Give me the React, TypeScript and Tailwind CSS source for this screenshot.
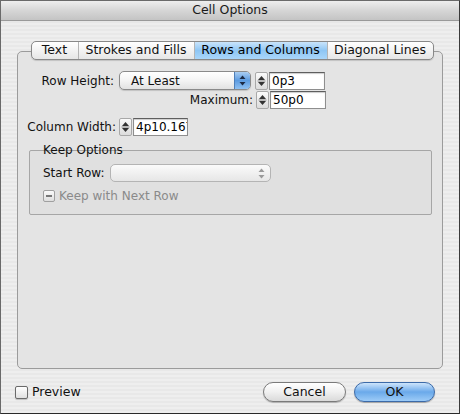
import React from "react";

const font = "font-['DejaVu_Sans',sans-serif]";

// little up/down arrows used by steppers and pop-ups
const Arrows = ({ color = "#222" }: { color?: string }) => (
  <svg width="7" height="11" viewBox="0 0 7 11">
    <path d="M3.5 0.5 L6.5 4 L0.5 4 Z" fill={color} />
    <path d="M3.5 10.5 L6.5 7 L0.5 7 Z" fill={color} />
  </svg>
);

const Stepper = () => (
  <div className="flex h-[18px] w-[13px] flex-col items-center justify-center rounded-[2px] border border-[#a8a8a8] bg-gradient-to-b from-[#fafafa] to-[#dcdcdc]">
    <svg width="9" height="12" viewBox="0 0 9 12">
      <path d="M4.5 1 L8 5 L1 5 Z" fill="#333" />
      <path d="M0.5 6 H8.5" stroke="#888" strokeWidth="1" />
      <path d="M4.5 11 L8 7 L1 7 Z" fill="#333" />
    </svg>
  </div>
);

const NumField = ({ value, width }: { value: string; width: string }) => (
  <div className="flex items-center">
    <Stepper />
    <div
      className={`ml-px flex h-[18px] ${width} items-center overflow-hidden whitespace-nowrap border border-[#8e8e8e] border-t-[#5e5e5e] bg-white pl-[2px] text-[12px] text-black shadow-[inset_0_1px_1px_rgba(0,0,0,0.2)]`}
    >
      {value}
    </div>
  </div>
);

const tabs = ["Text", "Strokes and Fills", "Rows and Columns", "Diagonal Lines"];
const tabW = ["w-[46px]", "w-[116px]", "w-[133px]", "w-[106px]"];

export default function App() {
  return (
    <div
      className={`${font} flex h-[414px] w-[460px] flex-col overflow-hidden border border-[#6a6a6a] border-b-[#2a2a2a] border-r-[#3a3a3a] bg-[repeating-linear-gradient(0deg,#eeeeee_0px,#eeeeee_2px,#e8e8e8_2px,#e8e8e8_4px)] text-[12px] text-[#111]`}
    >
      {/* title bar */}
      <div className="flex h-[20px] shrink-0 items-center justify-center border-b border-[#9a9a9a] bg-gradient-to-b from-[#eeeeee] via-[#d6d6d6] to-[#c4c4c4] text-[12.5px] text-[#1a1a1a]">
        Cell Options
      </div>

      {/* tab panel */}
      <div className="mx-[16px] mt-[20px] flex flex-col">
        <div className="relative z-10 -mb-[9px] ml-[4px] flex h-[19px] self-center overflow-hidden rounded-[5px] border border-[#888] bg-gradient-to-b from-[#ffffff] to-[#e6e6e6] shadow-[0_1px_1px_rgba(0,0,0,0.15)]">
          {tabs.map((t, i) => (
            <div
              key={t}
              className={`flex h-full ${tabW[i]} items-center justify-center text-[12.5px] ${
                i > 0 ? "border-l border-[#b4b4b4]" : ""
              } ${
                i === 2
                  ? "bg-gradient-to-b from-[#c9e4fb] via-[#8ec6f4] to-[#a9d6fa] text-black"
                  : "text-[#111]"
              }`}
            >
              {t}
            </div>
          ))}
        </div>

        <div className="flex h-[318px] flex-col rounded-[5px] border border-[#9b9b9b] bg-[#e4e4e4] px-[11px] pt-[19px]">
          {/* Row Height */}
          <div className="flex h-[19px] items-center">
            <div className="w-[85px] whitespace-nowrap text-right">Row Height:</div>
            <div className="ml-[5px] flex h-[19px] w-[132px] items-center overflow-hidden rounded-[5px] border border-[#8a8a8a] bg-gradient-to-b from-[#ffffff] via-[#f4f4f4] to-[#e2e2e2] shadow-[0_1px_1px_rgba(0,0,0,0.15)]">
              <div className="flex-1 pl-[11px]">At Least</div>
              <div className="flex h-full w-[16px] items-center justify-center border-l border-[#4f7fb8] bg-gradient-to-b from-[#a9cdf1] via-[#5c9be0] to-[#8fc1f2]">
                <Arrows color="#1c2a44" />
              </div>
            </div>
            <div className="ml-[4px]">
              <NumField value="0p3" width="w-[56px]" />
            </div>
          </div>

          {/* Maximum */}
          <div className="mt-px flex h-[18px] items-center">
            <div className="w-[224px] whitespace-nowrap text-right">Maximum:</div>
            <div className="ml-[3px]">
              <NumField value="50p0" width="w-[56px]" />
            </div>
          </div>

          {/* Column Width */}
          <div className="mt-[9px] flex h-[18px] items-center">
            <div className="-ml-[6px] w-[93px] whitespace-nowrap text-right">Column Width:</div>
            <div className="ml-[3px]">
              <NumField value="4p10.167" width="w-[55px]" />
            </div>
          </div>

          {/* Keep Options group */}
          <div className="mt-[7px] flex flex-col">
            <div className="relative z-10 -mb-[7px] ml-[12px] self-start px-[2px] leading-[14px]">Keep Options</div>
            <div className="flex h-[65px] w-[403px] flex-col rounded-[2px] border border-[#a6a6a6] bg-[#e0e0e0] pl-[13px] pt-[13px]">
              <div className="flex h-[18px] items-center">
                <div className="whitespace-nowrap">Start Row:</div>
                <div className="ml-[6px] flex h-[18px] w-[161px] items-center justify-end rounded-[5px] border border-[#b4b4b4] bg-gradient-to-b from-[#fbfbfb] to-[#e6e6e6] pr-[5px]">
                  <Arrows color="#9a9a9a" />
                </div>
              </div>
              <div className="mt-[5px] flex items-center text-[#8a8a8a]">
                <div className="flex h-[12px] w-[12px] items-center justify-center rounded-[2px] border border-[#a0a0a0] bg-gradient-to-b from-[#fafafa] to-[#dedede]">
                  <div className="h-[1.5px] w-[6px] bg-[#777]" />
                </div>
                <div className="ml-[4px]">Keep with Next Row</div>
              </div>
            </div>
          </div>
        </div>
      </div>

      {/* bottom bar */}
      <div className="mt-[13px] flex items-center pl-[14px] pr-[24px]">
        <div className="flex items-center">
          <div className="h-[13px] w-[13px] rounded-[2px] border border-[#6a6a6a] bg-gradient-to-b from-[#ffffff] to-[#e0e0e0] shadow-[0_1px_1px_rgba(0,0,0,0.2)]" />
          <div className="ml-[4px] text-[12.5px]">Preview</div>
        </div>
        <div className="ml-auto flex items-center gap-[8px]">
          <div className="flex h-[20px] w-[83px] items-center justify-center rounded-full border border-[#7a7a7a] bg-gradient-to-b from-[#ffffff] via-[#f0f0f0] to-[#dadada] text-[12.5px] shadow-[0_1px_1px_rgba(0,0,0,0.25)]">
            Cancel
          </div>
          <div className="flex h-[20px] w-[81px] items-center justify-center rounded-full border border-[#3c6aa8] bg-gradient-to-b from-[#cde4fb] via-[#6aa9ea] to-[#9ccbf7] text-[12.5px] shadow-[0_1px_1px_rgba(0,0,0,0.3)]">
            OK
          </div>
        </div>
      </div>
    </div>
  );
}
